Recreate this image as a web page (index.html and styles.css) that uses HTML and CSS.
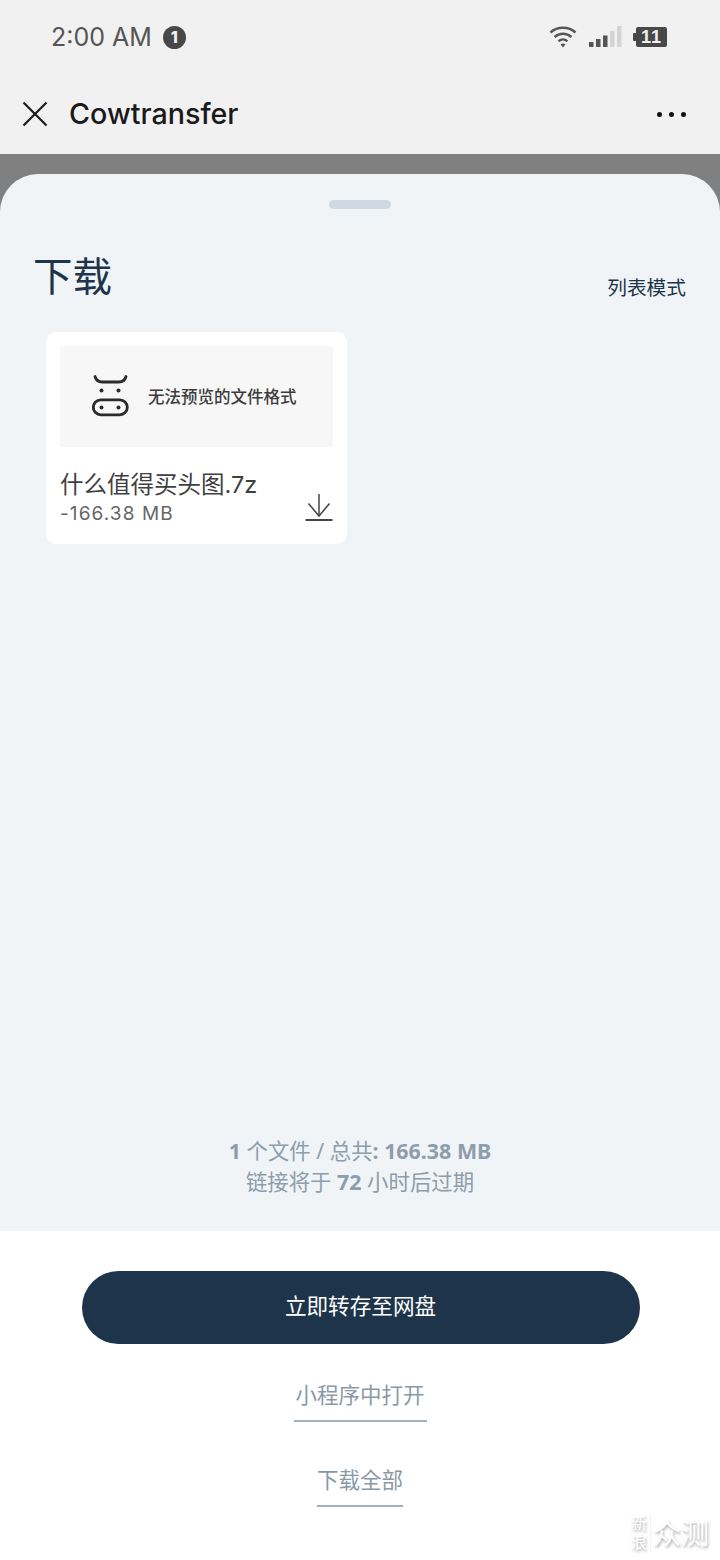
FILE: index.html
```html
<!DOCTYPE html>
<html lang="zh">
<head>
<meta charset="utf-8">
<title>Cowtransfer</title>
<link rel="stylesheet" href="styles.css">
</head>
<body>
<div class="page">
  <header class="chrome">
    <div class="status">
      <div class="status-left">
        <span class="time">2:00 AM</span>
        <span class="notif">1</span>
      </div>
      <div class="status-right">
        <svg class="wifi" width="28" height="24" viewBox="0 0 28 24"><g fill="none" stroke="#555" stroke-width="2.4"><path d="M1.5 7.5C8.5 1.2 19.5 1.2 26.5 7.5"/><path d="M5.5 12C10.5 7.6 17.5 7.6 22.5 12"/><path d="M9.5 16.2C12.2 14 15.8 14 18.500 16.2"/></g><path d="M11.500 19.500C13 18.300 15 18.300 16.500 19.500L14 22.500Z" fill="#555"/></svg>
        <svg class="signal" width="33" height="22" viewBox="0 0 33 22"><rect x="0" y="16" width="4.500" height="5" fill="#555"/><rect x="7" y="13" width="4.500" height="8" fill="#555"/><rect x="14" y="9.500" width="4.500" height="11.500" fill="#555"/><rect x="21" y="5" width="4.500" height="16" fill="#d4d4d4"/><rect x="28" y="0" width="4.500" height="21" fill="#d4d4d4"/></svg>
        <div class="battery"><span class="battery-cap"></span><span class="battery-body">11</span></div>
      </div>
    </div>
    <nav class="nav">
      <svg class="close" width="26" height="26" viewBox="0 0 26 26"><path d="M1.500 1.500L24.500 24.500M24.500 1.500L1.500 24.500" stroke="#1a1a1a" stroke-width="2.200" fill="none"/></svg>
      <span class="nav-title">Cowtransfer</span>
      <span class="dots"><i></i><i></i><i></i></span>
    </nav>
  </header>
  <div class="scrim">
    <main class="sheet">
      <div class="handle"></div>
      <div class="sheet-head">
        <h1>下载</h1>
        <span class="mode">列表模式</span>
      </div>
      <article class="card">
        <div class="preview">
          <svg class="cow" width="38" height="44" viewBox="0 0 38 44"><g fill="none" stroke="#2b2b2b" stroke-width="2.800" stroke-linecap="round"><path d="M3 1.500C4 5 6 7 10 7H27C31 7 33 5 34 1.500"/><rect x="1.300" y="24.800" width="34" height="15" rx="7.500"/></g><g fill="#2b2b2b"><circle cx="9.500" cy="15.500" r="2"/><circle cx="26.500" cy="15.500" r="2"/><circle cx="9.500" cy="32.500" r="2"/><circle cx="26.500" cy="32.500" r="2"/></g></svg>
          <span class="preview-text">无法预览的文件格式</span>
        </div>
        <div class="card-foot">
          <div class="file">
            <div class="file-name">什么值得买头图.7z</div>
            <div class="file-size">-166.38 MB</div>
          </div>
          <svg class="dl" width="28" height="27" viewBox="0 0 28 27"><g fill="none" stroke="#444" stroke-width="1.500"><path d="M14 0V22"/><path d="M3.500 9.500L14 22L24.500 9.500"/><path d="M0.500 26H27.500" stroke-width="2"/></g></svg>
        </div>
      </article>
      <div class="summary">
        <p><b>1</b> 个文件 / 总共<b>: 166.38 MB</b></p>
        <p>链接将于 <b>72</b> 小时后过期</p>
      </div>
    </main>
  </div>
  <footer class="actions">
    <button class="primary">立即转存至网盘</button>
    <a class="link link-a">小程序中打开</a>
    <a class="link link-b">下载全部</a>
    <div class="watermark"><span class="wm-small"><span class="wm-char">新</span><span class="wm-char">浪</span></span><span class="wm-big">众测</span></div>
  </footer>
</div>
</body>
</html>
```
FILE: styles.css
```css
* { box-sizing: border-box; }
html, body { margin: 0; padding: 0; }
body {
  width: 720px;
  height: 1560px;
  overflow: hidden;
  font-family: "Noto Sans", "Noto Sans CJK SC", sans-serif;
  background: #fff;
}
.page { display: flex; flex-direction: column; height: 1560px; }

.chrome { height: 154px; background: #f1f1f1; flex: none; }
.status {
  height: 74px;
  display: flex;
  justify-content: space-between;
  align-items: center;
  padding: 0 53px 0 51px;
}
.status-left { display: flex; align-items: center; gap: 11px; }
.time { font-family: "Inter", sans-serif; font-size: 25px; line-height: 32px; color: #555; }
.notif {
  width: 23px; height: 23px; border-radius: 50%;
  background: #484848; color: #f1f1f1;
  font-family: "Inter", sans-serif;
  font-size: 16px; font-weight: 800; line-height: 23px; text-align: center;
}
.status-right { display: flex; align-items: center; gap: 0; }
.signal { margin-left: 12px; }
.battery { display: flex; align-items: center; margin-left: 11px; }
.battery-cap { width: 3px; height: 8px; background: #484848; border-radius: 1px 0 0 1px; }
.battery-body {
  width: 31px; height: 20px; background: #484848; color: #f1f1f1;
  border-radius: 2px; font-size: 18px; font-weight: 700; line-height: 20px; text-align: center;
  font-family: "Liberation Sans", sans-serif; letter-spacing: 1px;
}
.nav { height: 80px; display: flex; align-items: center; padding: 0 34px 0 22px; }
.nav-title { font-family: "Inter", sans-serif; margin-left: 21px; font-size: 28.700px; line-height: 40px; color: #1a1a1a; font-weight: 500; flex: 1; }
.dots { display: flex; gap: 7px; }
.dots i { width: 5px; height: 5px; border-radius: 50%; background: #111; }

.scrim { height: 1077px; flex: none; background: #808080; padding-top: 20px; }
.sheet {
  height: 1057px;
  background: #f0f4f7;
  border-radius: 38px 38px 0 0;
  display: flex; flex-direction: column;
  position: relative;
}
.handle { width: 62px; height: 9px; border-radius: 5px; background: #d0d9e2; margin: 26px auto 0; }
.sheet-head {
  display: flex; justify-content: space-between; align-items: flex-end;
  padding: 0 34px 0 33px; margin-top: 29px; height: 68px;
}
.sheet-head h1 { margin: 0; font-size: 39.500px; line-height: 60px; font-weight: 400; color: #1e344b; }
.mode { font-size: 19.700px; line-height: 30px; color: #1e344b; margin-bottom: 3px; }

.card {
  width: 301px; height: 212px; margin: 26px 0 0 46px;
  background: #fff; border-radius: 10px; padding: 14px 14px 0 14px;
}
.preview {
  height: 101px; background: #f7f7f7;
  display: flex; align-items: center; padding-left: 32px;
}
.preview-text { margin-left: 18px; font-size: 16.500px; font-weight: 500; color: #3c3c3c; line-height: 22px; }
.card-foot { display: flex; justify-content: space-between; align-items: flex-end; padding-top: 21px; }
.file { font-family: "Inter", "Noto Sans CJK SC", sans-serif; }
.file-name { font-size: 23.500px; line-height: 33px; color: #3f3f3f; }
.file-size { font-size: 19px; line-height: 25px; color: #666; letter-spacing: 1.100px; }
.dl { margin-bottom: 5px; }

.summary { margin-top: auto; padding-bottom: 34px; text-align: center; color: #8e9dab; font-size: 21.400px; line-height: 31px; }
.summary p { margin: 0; }
.summary b { font-weight: 700; }

.actions {
  flex: 1; position: relative; background: #fff;
  display: flex; flex-direction: column; align-items: center; padding-top: 40px;
}
.primary {
  width: 558px; height: 73px; margin-left: 1px; padding: 0 0 7px; border: 0; border-radius: 37px;
  background: #1e344b; color: #fff; font: inherit; font-size: 21.600px;
}
.link {
  color: #8a99a8; font-size: 21.500px; line-height: 34px; padding-bottom: 8px;
  border-bottom: 2px solid #a3b0bd; text-align: center; white-space: nowrap;
}
.link-a { width: 133px; margin-top: 34px; }
.link-b { width: 86px; margin-top: 41px; }
.watermark {
  position: absolute; left: 631px; top: 283px;
  display: flex; align-items: center; color: #fff;
  text-shadow: 1px 2px 3px rgba(0,0,0,.35);
}
.wm-small { display: flex; flex-direction: column; padding-right: 3px; border-right: 1px solid #f2f2f2; }
.wm-char { font-size: 16px; line-height: 19px; }
.wm-big { font-size: 28px; line-height: 38px; margin-left: 2px; }
```
